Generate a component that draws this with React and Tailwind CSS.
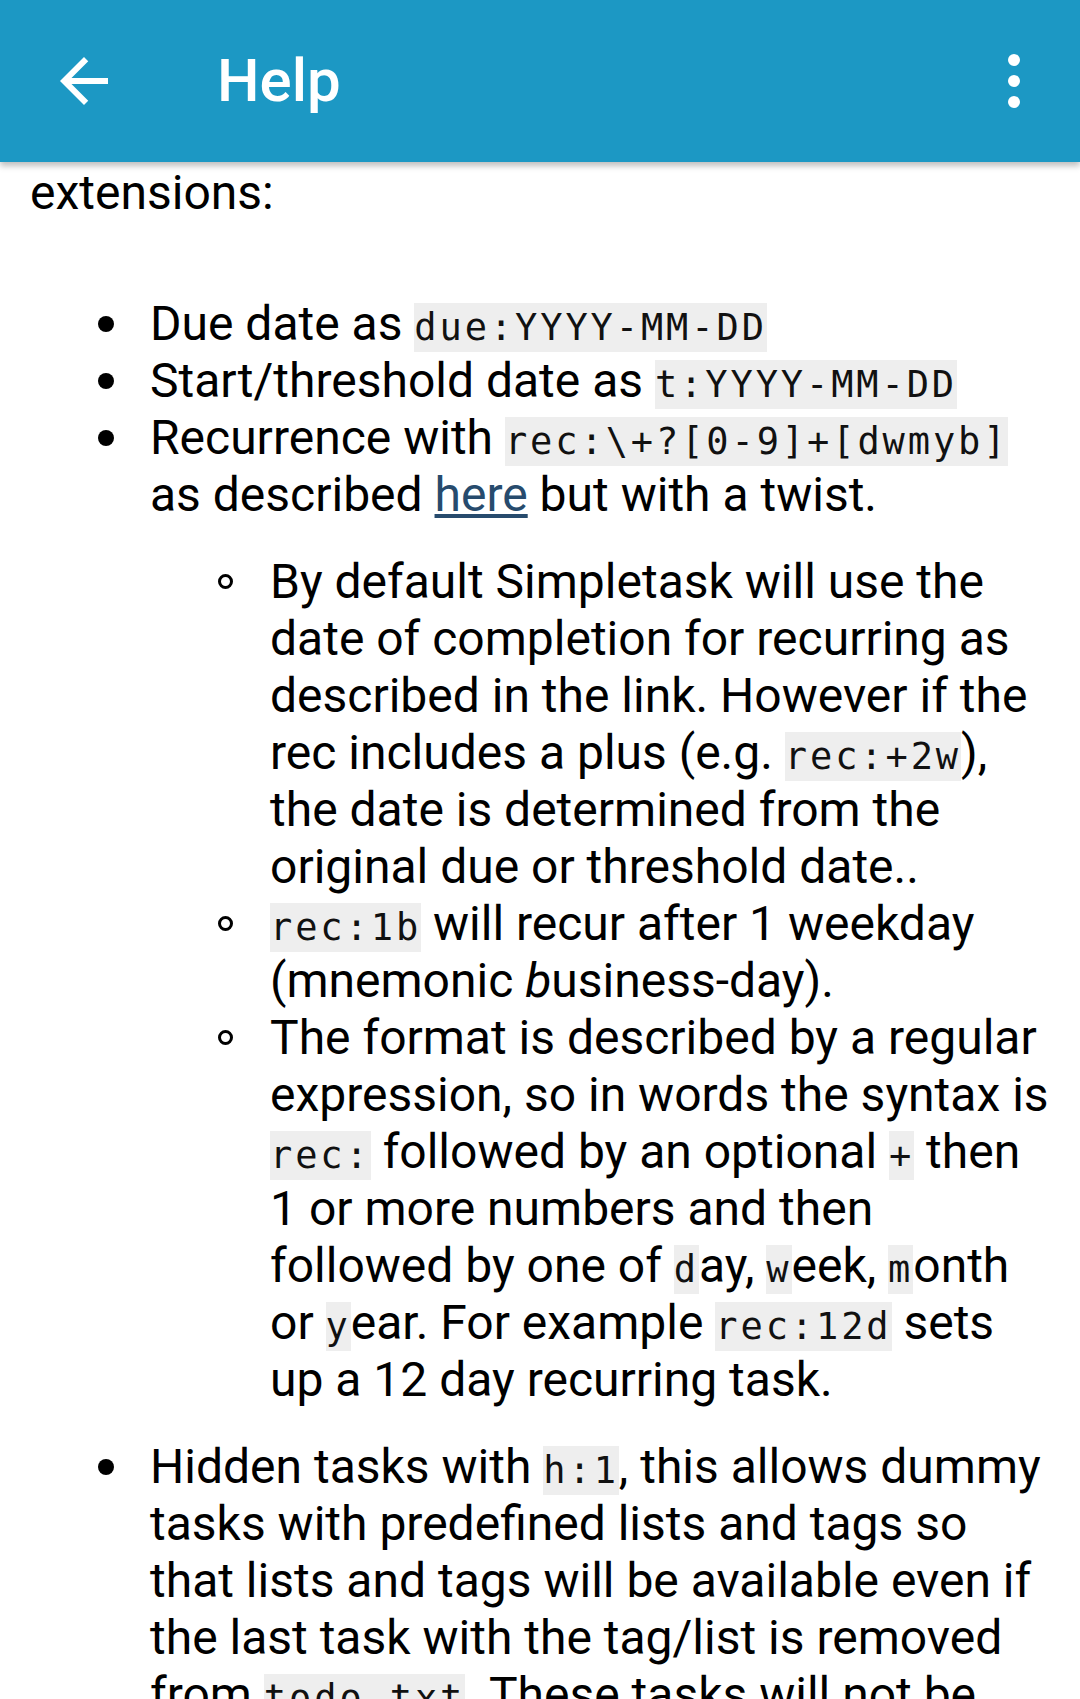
import React from 'react';

const Code = ({ children }) => (
  <code className="bg-[#eeeeee] py-[3px] font-['DejaVu_Sans_Mono',monospace] text-[37px] leading-[0] tracking-[2.9px] text-[#111]">
    {children}
  </code>
);

const BackArrow = () => (
  <svg width="72" height="72" viewBox="0 0 24 24" fill="none">
    <path d="M20 11H7.83l5.59-5.59L12 4l-8 8 8 8 1.41-1.41L7.83 13H20v-2z" fill="#fff" />
  </svg>
);

const MoreVert = () => (
  <svg width="72" height="72" viewBox="0 0 24 24" fill="#fff">
    <circle cx="12" cy="5" r="2" />
    <circle cx="12" cy="12" r="2" />
    <circle cx="12" cy="19" r="2" />
  </svg>
);

const Item = ({ children }) => (
  <li className="flex">
    <span className="flex h-[57px] w-[60px] shrink-0 items-center pl-[8px]">
      <span className="h-[16px] w-[16px] rounded-full bg-black" />
    </span>
    <div className="min-w-0 flex-1">{children}</div>
  </li>
);

const SubItem = ({ children }) => (
  <li className="flex">
    <span className="flex h-[57px] w-[60px] shrink-0 items-center pl-[8px]">
      <span className="h-[15px] w-[15px] rounded-full border-[3px] border-black" />
    </span>
    <div className="min-w-0 flex-1">{children}</div>
  </li>
);

const App = () => {
  return (
    <div className="h-[1699px] w-[1080px] overflow-hidden bg-white font-['Roboto',sans-serif] text-black">
      {/* Toolbar */}
      <header className="relative z-10 flex h-[162px] items-center bg-[#1c98c4] shadow-[0_4px_6px_rgba(0,0,0,0.25)]">
        <div className="ml-[48px] flex h-[72px] w-[72px] items-center justify-center">
          <BackArrow />
        </div>
        <h1 className="ml-[97px] text-[60px] font-medium leading-none text-white">Help</h1>
        <div className="ml-auto mr-[30px] flex h-[72px] w-[72px] items-center justify-center">
          <MoreVert />
        </div>
      </header>

      {/* Help content */}
      <div className="px-[30px] pt-[2px] text-[48px] leading-[57px]">
        <p>extensions:</p>
        <ul className="mt-[74px] pl-[60px]">
          <Item>
            Due date as <Code>due:YYYY-MM-DD</Code>
          </Item>
          <Item>
            Start/threshold date as <Code>t:YYYY-MM-DD</Code>
          </Item>
          <Item>
            Recurrence with <Code>rec:\+?[0-9]+[dwmyb]</Code> as described{' '}
            <a href="#" className="text-[#274b6d] underline">here</a> but with a twist.
            <ul className="my-[30px] pl-[60px]">
              <SubItem>
                By default Simpletask will use the date of completion for recurring as described in
                the link. However if the rec includes a plus (e.g. <Code>rec:+2w</Code>), the date is
                determined from the original due or threshold date..
              </SubItem>
              <SubItem>
                <Code>rec:1b</Code> will recur after 1 weekday (mnemonic <em>b</em>usiness-day).
              </SubItem>
              <SubItem>
                The format is described by a regular expression, so in words the syntax is{' '}
                <Code>rec:</Code> followed by an optional <Code>+</Code> then 1 or more numbers and
                then followed by one of <Code>d</Code>ay, <Code>w</Code>eek, <Code>m</Code>onth or{' '}
                <Code>y</Code>ear. For example <Code>rec:12d</Code> sets up a 12 day recurring task.
              </SubItem>
            </ul>
          </Item>
          <Item>
            Hidden tasks with <Code>h:1</Code>, this allows dummy tasks with predefined lists and tags
            so that lists and tags will be available even if the last task with the tag/list is
            removed from <Code>todo.txt</Code>. These tasks will not be shown in the task list.
          </Item>
        </ul>
      </div>
    </div>
  );
};

export default App;
